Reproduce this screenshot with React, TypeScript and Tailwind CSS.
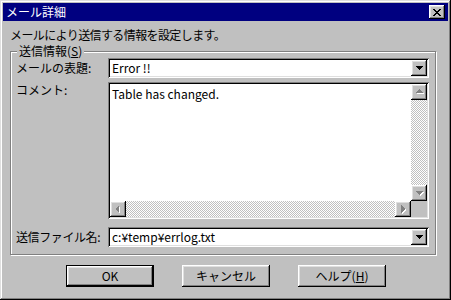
import React from 'react';

const raised =
  'shadow-[inset_-1px_-1px_#000,inset_1px_1px_#fff,inset_-2px_-2px_#808080,inset_2px_2px_#dfdfdf]';
const sunken =
  'shadow-[inset_1px_1px_#808080,inset_-1px_-1px_#fff,inset_2px_2px_#000,inset_-2px_-2px_#dfdfdf]';

type Dir = 'up' | 'down' | 'left' | 'right';

const tri: Record<Dir, string> = {
  up: '8,5 4,9 12,9',
  down: '4,6 12,6 8,10',
  left: '9,4 9,12 5,8',
  right: '6,4 6,12 10,8',
};

function ArrowBtn({ dir, disabled = false }: { dir: Dir; disabled?: boolean }) {
  return (
    <div className={`w-[16px] h-[16px] shrink-0 bg-[#c0c0c0] ${raised}`}>
      <svg width="16" height="16" viewBox="0 0 16 16" shapeRendering="crispEdges">
        {disabled && <polygon points={tri[dir]} fill="#fff" transform="translate(1,1)" />}
        <polygon points={tri[dir]} fill={disabled ? '#808080' : '#000'} />
      </svg>
    </div>
  );
}

// スクロールバーの網掛け
function Track({ id }: { id: string }) {
  return (
    <div className="flex-1 relative">
      <svg className="absolute inset-0" width="100%" height="100%" shapeRendering="crispEdges">
        <defs>
          <pattern id={id} width="2" height="2" patternUnits="userSpaceOnUse">
            <rect width="2" height="2" fill="#c0c0c0" />
            <rect width="1" height="1" fill="#fff" />
            <rect x="1" y="1" width="1" height="1" fill="#fff" />
          </pattern>
        </defs>
        <rect width="100%" height="100%" fill={`url(#${id})`} />
      </svg>
    </div>
  );
}

function Combo({ value }: { value: string }) {
  return (
    <div className={`h-[20px] w-full bg-white flex items-center p-[2px] ${sunken}`}>
      <span className="flex-1 pl-[2px] text-[12px] leading-[14px] text-black">{value}</span>
      <ArrowBtn dir="down" />
    </div>
  );
}

function Btn({ label, primary = false }: { label: React.ReactNode; primary?: boolean }) {
  return (
    <div className={`w-[88px] h-[22px] ${primary ? 'border border-black' : ''}`}>
      <div
        className={`w-full h-full bg-[#c0c0c0] flex items-center justify-center text-[12px] leading-[14px] text-black ${raised}`}
      >
        {label}
      </div>
    </div>
  );
}

export default function App() {
  return (
    <div
      className={`w-[451px] h-[300px] bg-[#c0c0c0] p-[3px] flex flex-col font-['Noto_Sans_CJK_JP',sans-serif] shadow-[inset_-1px_-1px_#000,inset_1px_1px_#dfdfdf,inset_-2px_-2px_#808080,inset_2px_2px_#fff]`}
    >
      {/* タイトルバー */}
      <div className="h-[18px] bg-[#000080] flex items-center justify-between pl-[3px] pr-[3px]">
        <span className="text-white text-[12px] leading-[14px]">メール詳細</span>
        <div className={`w-[16px] h-[14px] bg-[#c0c0c0] flex items-center justify-center ${raised}`}>
          <svg width="8" height="7" viewBox="0 0 8 7" shapeRendering="crispEdges">
            <path d="M0 0h2v1h-2zM6 0h2v1h-2zM1 1h2v1h-2zM5 1h2v1h-2zM2 2h4v1h-4zM3 3h2v1h-2zM2 4h4v1h-4zM1 5h2v1h-2zM5 5h2v1h-2zM0 6h2v1h-2zM6 6h2v1h-2z" fill="#000" />
          </svg>
        </div>
      </div>

      <p className="mt-[7px] ml-[7px] text-[12px] leading-[14px] tracking-[-0.6px] text-black">
        メールにより送信する情報を設定します。
      </p>

      {/* 送信情報 */}
      <div className="relative mt-[9px] ml-[7px] mr-[12px] border border-[#808080] shadow-[inset_1px_1px_#fff,1px_1px_#fff] pt-[6px] pb-[7px] pl-[5px] pr-[6px] flex flex-col">
        <span className="absolute left-[6px] top-[-8px] px-[2px] bg-[#c0c0c0] text-[12px] leading-[14px] text-black">
          送信情報(<span className="underline">S</span>)
        </span>

        <div className="flex items-center">
          <span className="w-[92px] text-[12px] leading-[14px] text-black">メールの表題:</span>
          <div className="flex-1">
            <Combo value="Error !!" />
          </div>
        </div>

        <div className="flex mt-[4px]">
          <span className="w-[92px] pt-[1px] text-[12px] leading-[14px] text-black">コメント:</span>
          <div className={`flex-1 h-[137px] bg-white p-[2px] flex flex-col ${sunken}`}>
            <div className="flex flex-1">
              <div className="flex-1 pl-[2px] pt-[3px] text-[12px] leading-[14px] text-black">
                Table has changed.
              </div>
              <div className="w-[16px] flex flex-col">
                <ArrowBtn dir="up" disabled />
                <Track id="vtrack" />
                <ArrowBtn dir="down" disabled />
              </div>
            </div>
            <div className="flex h-[16px]">
              <ArrowBtn dir="left" disabled />
              <Track id="htrack" />
              <ArrowBtn dir="right" disabled />
              <div className="w-[16px] bg-[#c0c0c0]" />
            </div>
          </div>
        </div>

        <div className="flex items-center mt-[8px]">
          <span className="w-[92px] text-[12px] leading-[14px] tracking-[-0.4px] text-black">送信ファイル名:</span>
          <div className="flex-1">
            <Combo value="c:¥temp¥errlog.txt" />
          </div>
        </div>
      </div>

      {/* ボタン */}
      <div className="flex mt-[10px] pl-[63px] gap-[28px]">
        <Btn label="OK" primary />
        <Btn label="キャンセル" />
        <Btn
          label={
            <>
              ヘルプ(<span className="underline">H</span>)
            </>
          }
        />
      </div>
    </div>
  );
}
